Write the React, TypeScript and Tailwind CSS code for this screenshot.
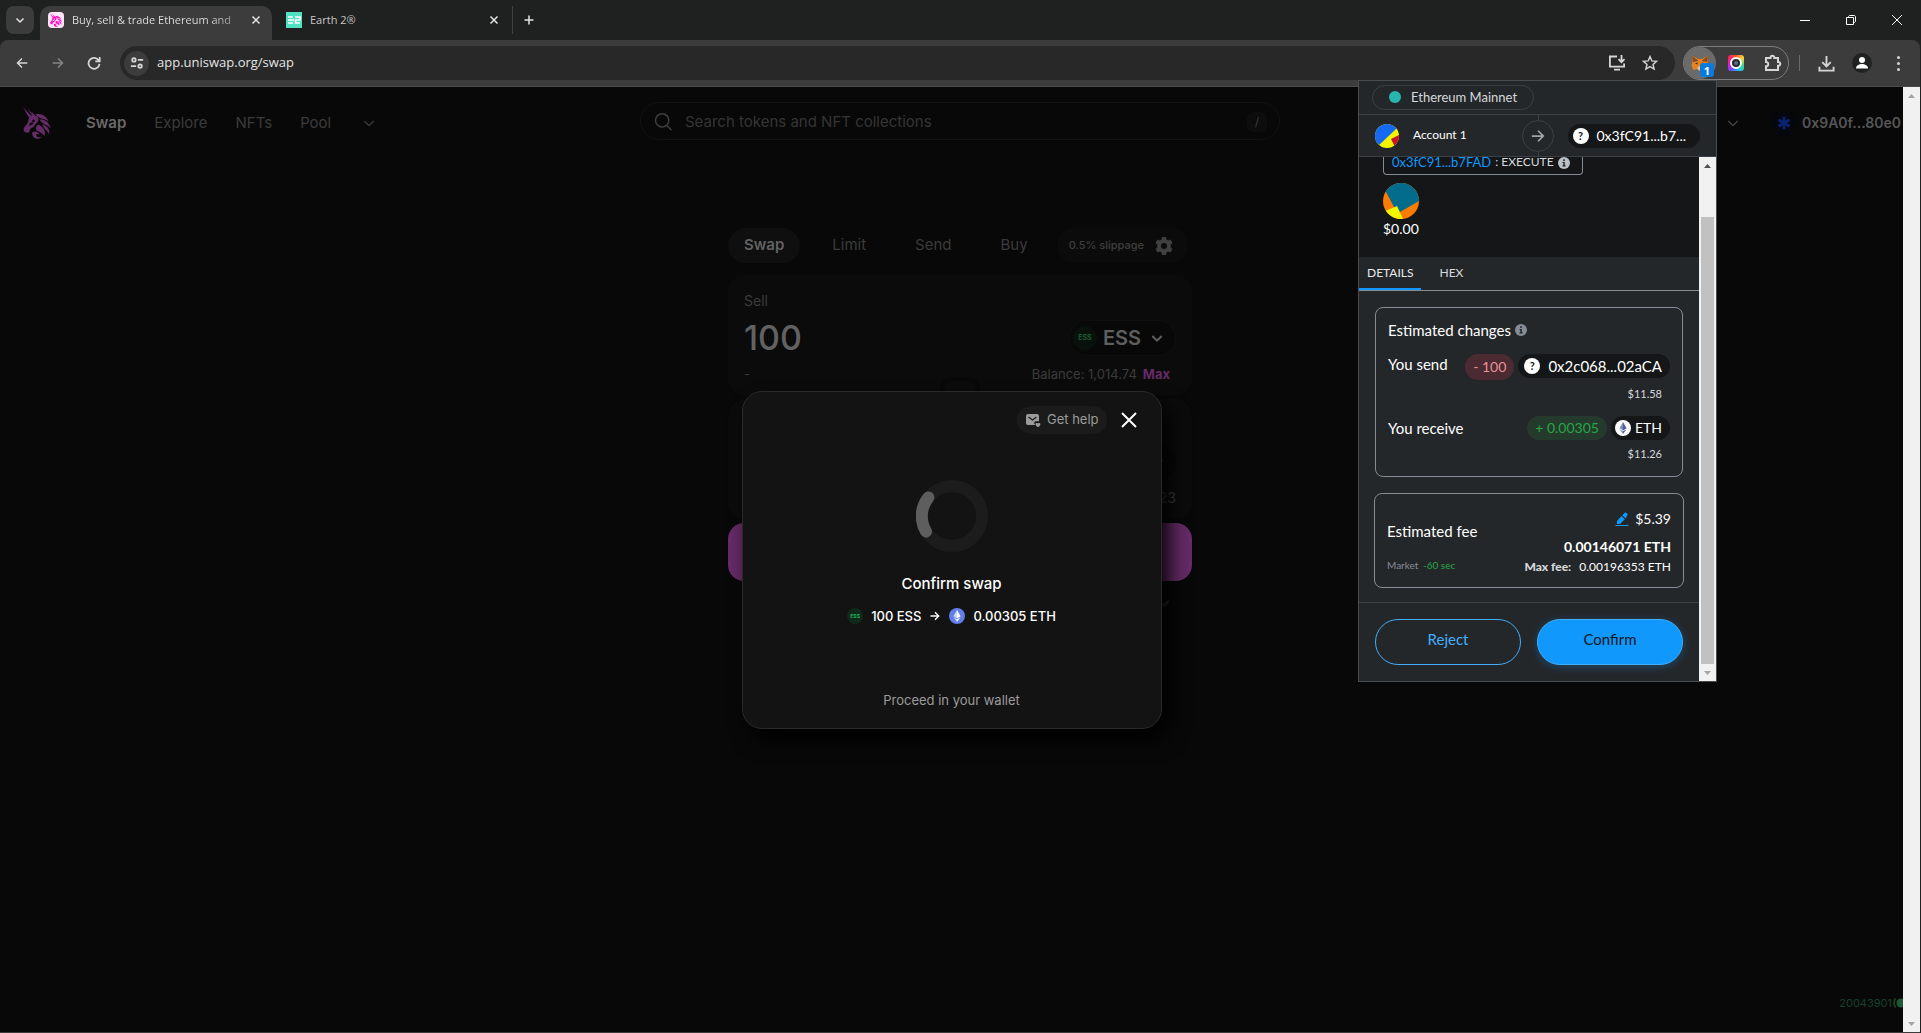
import React from "react";

const CHROME = "font-['Open_Sans','Noto_Sans',sans-serif]";
const PAGE = "font-[Inter,'Liberation_Sans',sans-serif]";

type IconProps = { className?: string };

function Line({ d, className = "", w = 2, box = 24 }: IconProps & { d: string; w?: number; box?: number }) {
  return (
    <svg
      viewBox={`0 0 ${box} ${box}`}
      className={`shrink-0 ${className}`}
      fill="none"
      stroke="currentColor"
      strokeWidth={w}
      aria-hidden="true"
    >
      <path d={d} />
    </svg>
  );
}

const CROSS = "M5 5 19 19M19 5 5 19";
const CHEVRON = "M5 9l7 7 7-7";

function Unicorn({ className = "" }: IconProps) {
  return (
    <svg viewBox="0 0 28 32" className={`shrink-0 ${className}`} fill="currentColor" aria-hidden="true">
      <path d="M0 0 8.800 9.500 7.200 11.500 5 9Z" />
      <path d="M4 1 10.500 8 9.600 9.200Z" />
      <path
        fillRule="evenodd"
        d="M8.500 4.500 12 8.500C14.500 9 15.800 11 15.500 13.200 15.200 15 13.500 15.800 12.500 17c-.9 1.200-.8 2.300-2.300 3.300-1.400.9-2.600.8-3.200 2.200-.4 1-.2 2.300-1.500 3C3.600 26.500.8 25.300.6 22.800.5 20.500 2.500 19 4 17c1.800-2.400 1-5 2.700-7.500L9.500 8ZM10.500 12.500a1.300 1.300 0 1 0 .01 0ZM7.500 15.500 5.500 19l4-1.500 1.200-2Z"
      />
      <path d="M12.500 7.300C19 6.300 24 9.500 25.500 15 22.500 11.500 18.500 12.200 15.500 10.300 14 9.300 13 8.500 12.500 7.300Z" />
      <path d="M16.500 12.200C22 12.800 27 15.500 27.500 21.500 26 18.800 23.500 18.500 21 17 18.800 15.700 17.500 14.300 16.500 12.200Z" />
      <path d="M19 17.300C24 19 27.500 22 26 28 25.500 25 24 24.500 22.500 22.800 21 21.200 20 19.500 19 17.300Z" />
      <path d="M15 17.500C19.500 19.500 23.500 23.500 21.500 29 20.500 26.500 17 25.500 14.500 24 11.800 22.500 13 19 15 17.500Z" />
      <path d="M9 25.500C12.500 23.500 16 25 16.500 28 15 26.500 12.800 27 13.500 28.700 14.200 30.200 17 30.500 19 30 16 33 10.500 32 9.500 28.500Z" />
    </svg>
  );
}

function EthMark({ className = "", bg, fg }: IconProps & { bg: string; fg: string }) {
  return (
    <svg viewBox="0 0 16 16" className={`shrink-0 ${className}`} aria-hidden="true">
      <circle cx="8" cy="8" r="8" fill={bg} />
      <path d="M8 2 4.400 8.200 8 10.400Z" fill={fg} opacity=".7" />
      <path d="M8 2 11.600 8.200 8 10.400Z" fill={fg} />
      <path d="M4.400 9.200 8 14 8 11.300Z" fill={fg} opacity=".7" />
      <path d="M11.600 9.200 8 14 8 11.300Z" fill={fg} />
    </svg>
  );
}

function Info({ className = "" }: IconProps) {
  return (
    <svg viewBox="0 0 12 12" className={`shrink-0 ${className}`} aria-hidden="true">
      <circle cx="6" cy="6" r="6" fill="currentColor" />
      <path d="M5.200 2.300h1.600v1.600H5.200zM4.500 4.900h2.300v3.300h.8v1.200H4.500V8.200h.8V6.100h-.8z" fill="#24272a" />
    </svg>
  );
}

function Unknown() {
  return (
    <span className="flex size-4 shrink-0 items-center justify-center rounded-full bg-white text-[11px] leading-4 font-bold text-[#141618]">
      ?
    </span>
  );
}

function TabStrip() {
  return (
    <div className="flex h-10 shrink-0 items-start bg-[#1f2120] pl-1.5">
      <button aria-label="Search tabs" className="mt-1.5 flex size-7 items-center justify-center rounded-lg bg-[#3c3c3c] text-[#e3e3e3]">
        <Line d={CHEVRON} className="size-3" w={3} />
      </button>
      <div className="mt-1.5 ml-1.5 flex h-[34px] w-[232px] items-center rounded-t-[10px] bg-[#3c3c3c] px-2 pb-1.5">
        <span className="flex size-4 shrink-0 items-center justify-center rounded-sm bg-[#fde4f7] text-[#fb11c0]">
          <Unicorn className="size-3.5" />
        </span>
        <span className="ml-2 w-[170px] bg-linear-to-r from-[#e3e3e3] from-80% to-[#777777] bg-clip-text text-[11px] whitespace-nowrap text-transparent">
          Buy, sell &amp; trade Ethereum and
        </span>
        <button aria-label="Close tab" className="ml-2 text-[#e3e3e3]">
          <Line d={CROSS} className="size-3" w={3} />
        </button>
      </div>
      <div className="mt-1.5 flex h-7 w-[241px] items-center border-r border-[#3f4140] pr-3 pl-3.5">
        <svg viewBox="0 0 16 16" className="size-4 shrink-0" aria-hidden="true">
          <rect width="16" height="16" fill="#50e3c2" />
          <path d="M2 5h5M2 8h6M2 11h5M9 5h5v3H9.500v3H14" stroke="#fff" strokeWidth="1.600" fill="none" />
        </svg>
        <span className="ml-2 grow text-[11px] text-[#c7c7c7]">Earth 2®</span>
        <button aria-label="Close tab" className="text-[#e3e3e3]">
          <Line d={CROSS} className="size-3" w={3} />
        </button>
      </div>
      <button aria-label="New tab" className="mt-1.5 ml-1 flex h-7 w-6 items-center justify-center text-[#e3e3e3]">
        <Line d="M12 3v18M3 12h18" className="size-3" w={3} />
      </button>
      <div className="ml-auto flex h-10 items-center text-white">
        <button aria-label="Minimize" className="flex h-10 w-[46px] items-center justify-center">
          <span className="h-px w-2.5 bg-white" />
        </button>
        <button aria-label="Restore" className="flex h-10 w-[46px] items-center justify-center">
          <Line box={10} w={1} d="M.5 2.500h7v7h-7zM2.500 2.500V2c0-.9.6-1.500 1.500-1.500h4c.9 0 1.500.6 1.500 1.500v4c0 .9-.6 1.500-1.500 1.500h-.5" className="size-2.5" />
        </button>
        <button aria-label="Close window" className="flex h-10 w-[46px] items-center justify-center">
          <Line box={10} w={1} d="M0 0 10 10M10 0 0 10" className="size-2.5" />
        </button>
      </div>
    </div>
  );
}

function Fox() {
  return (
    <svg viewBox="0 0 18 17" className="size-[18px]" aria-hidden="true">
      <path d="M1 1 7 4.500h4L17 1l-.6 5.500L17.500 11l-2 4.500-4-1-1.500 1.500H8l-1.500-1.500-4 1L.5 11l1.100-4.500Z" fill="#e8821e" />
      <path d="M1 1 7.500 6.500 2 7.500ZM17 1 10.500 6.500 16 7.500Z" fill="#8d4a1c" />
      <path d="M6.500 8 4 9l2.500 1ZM11.500 8 14 9l-2.500 1Z" fill="#233447" />
      <path d="M7 12h4l.5 2.500L10 16H8l-1.500-1.500Z" fill="#d7c1b3" />
    </svg>
  );
}

function Toolbar() {
  return (
    <div className="flex h-[47px] shrink-0 items-center rounded-t-lg border-b border-[#4c4c4c] bg-[#3c3c3c] pr-px text-[#d6d6d6]">
      <nav className="flex items-center">
        <button aria-label="Back" className="flex h-9 w-9 items-center justify-center pl-2">
          <Line box={16} d="M15 8H2.500M8 2 2 8l6 6" className="size-3" />
        </button>
        <button aria-label="Forward" className="flex h-9 w-9 items-center justify-center pl-2 text-[#858585]">
          <Line box={16} d="M1 8h12.500M8 2l6 6-6 6" className="size-3" />
        </button>
        <button aria-label="Reload" className="flex h-9 w-9 items-center justify-center pl-2">
          <Line box={16} d="M13.500 5.200A6.300 6.300 0 1 0 14.300 9M14.500 1v5H9.500" className="size-[14px]" />
        </button>
      </nav>
      <div className="ml-3 flex h-[34px] grow items-center rounded-full bg-[#282828] pr-[17px] pl-1">
        <button aria-label="Site information" className="flex size-[25px] items-center justify-center rounded-full bg-[#3c3c3c]">
          <Line box={16} d="M2.500 4.500a2 2 0 1 0 4 0 2 2 0 1 0-4 0M9 4.500h6M1 11.500h6M9.500 11.500a2 2 0 1 0 4 0 2 2 0 1 0-4 0" className="size-[14px]" />
        </button>
        <input
          aria-label="Address"
          defaultValue="app.uniswap.org/swap"
          className="ml-2 min-w-0 grow bg-transparent text-[13px] text-[#e3e3e3] outline-none"
        />
        <button aria-label="Install app" className="mr-4">
          <Line box={18} w={1.8} d="M9 2.500H1.900v10.200h14.200V9.500M6 15.600h6M13.500 1v7M10.500 5.200l3 3 3-3" className="size-[18px]" />
        </button>
        <button aria-label="Bookmark">
          <Line box={18} w={1.6} d="M9 1.800l2.100 4.900 5.300.5-4 3.500 1.200 5.200L9 13.100l-4.600 2.800 1.200-5.200-4-3.500 5.300-.5Z" className="size-4" />
        </button>
      </div>
      <div className="ml-2 flex h-[34px] w-[106px] items-center rounded-full border border-[#7d7d7d]">
        <button aria-label="MetaMask" className="relative flex size-8 items-center justify-center rounded-full bg-[#6b6b6b]">
          <Fox />
          <span className="absolute right-[2px] bottom-[2px] flex h-3.5 w-3.5 items-center justify-center rounded-[3px] bg-[#0a7bdc] text-[11px] leading-none font-bold text-white">
            1
          </span>
        </button>
        <button aria-label="Camera extension" className="ml-3 flex size-4 items-center justify-center rounded-[3px] bg-[conic-gradient(#ff5a1f,#ffd23d,#3ddc84,#22c3e6,#5b5bff,#e51bd6,#ff1f6b,#ff5a1f)]">
          <span className="flex size-3 items-center justify-center rounded-full border-2 border-white bg-[#26292e]">
            <span className="size-1 rounded-full bg-[#5d6e80]" />
          </span>
        </button>
        <button aria-label="Extensions" className="ml-5">
          <Line box={18} w={2} d="M2 4h4.500c-.3-3 4-3 3.800 0H14v4c3-.3 3 4 0 3.800V16H2v-3.700c3 .3 3-4.600 0-4.300Z" className="size-[18px]" />
        </button>
      </div>
      <span className="ml-2.5 h-4 w-px bg-[#6a6a6a]" />
      <div className="flex items-center">
        <button aria-label="Downloads" className="ml-[18px]">
          <Line box={18} w={2} d="M9 1v11M4.500 7.500 9 12l4.500-4.500M1.500 12.500v4h15v-4" className="size-[17px]" />
        </button>
        <button aria-label="Profile" className="ml-[17px] flex size-5 items-center justify-center rounded-full bg-[#202221] text-white">
          <svg viewBox="0 0 14 14" className="size-3.5" fill="currentColor" aria-hidden="true">
            <circle cx="7" cy="4" r="3" />
            <path d="M1 12.500c0-3 3-4.500 6-4.500s6 1.500 6 4.500Z" />
          </svg>
        </button>
        <button aria-label="Menu" className="mr-[13px] ml-[18px] flex w-4 flex-col items-center gap-[3px]">
          <span className="size-[3px] rounded-full bg-[#d6d6d6]" />
          <span className="size-[3px] rounded-full bg-[#d6d6d6]" />
          <span className="size-[3px] rounded-full bg-[#d6d6d6]" />
        </button>
      </div>
    </div>
  );
}

function SiteHeader() {
  return (
    <header className="relative flex h-[72px] items-center pl-[23px] text-[15px] text-[#3b3b3b]">
      <a href="#home" aria-label="Home" className="text-[#652b66]">
        <Unicorn className="h-8 w-7" />
      </a>
      <nav className="ml-[35px] flex items-center">
        <a href="#swap" className="font-semibold text-[#6a6a6a]">Swap</a>
        <a href="#explore" className="ml-[28px]">Explore</a>
        <a href="#nfts" className="ml-[28px]">NFTs</a>
        <a href="#pool" className="ml-[28px]">Pool</a>
        <button aria-label="More" className="ml-[30px]">
          <Line d={CHEVRON} className="size-4" />
        </button>
      </nav>
      <div className="absolute inset-x-0 top-[15px] mx-auto flex h-[38px] w-1/3 items-center rounded-[20px] border border-[#121212] px-3 pt-0.5">
        <Line d="M3 10a8 8 0 1 0 16 0 8 8 0 1 0-16 0M16.500 16 22 21.500" className="size-5 text-[#3f3f3f]" w={1.8} />
        <input
          aria-label="Search tokens and NFT collections"
          placeholder="Search tokens and NFT collections"
          className="ml-3 min-w-0 grow bg-transparent outline-none placeholder:text-[#353535]"
        />
        <kbd className={`flex size-5 items-center justify-center rounded-md bg-[#0d0d0d] text-xs ${PAGE}`}>/</kbd>
      </div>
      <button className="mr-[19px] ml-auto flex items-center text-sm font-semibold text-[#565656]">
        <Line d={CHEVRON} className="mr-[31px] size-4 text-[#454545]" />
        <span className="mr-1.5 flex size-6 items-center justify-center rounded-full bg-[#05070f] text-[#0a2270]">
          <Line d="M12 1v22M2.500 6.500l19 11M21.500 6.500l-19 11" w={5} className="size-3.5" />
        </span>
        0x9A0f...80e0
      </button>
    </header>
  );
}

function SwapCard() {
  return (
    <section className="mx-auto mt-[69px] w-[464px] text-[#3b3b3b]">
      <div className="flex h-[35px] items-center text-[15px]">
        <button className="h-[35px] rounded-full bg-[#0f0f0f] px-4 font-semibold text-[#626262]">Swap</button>
        <button className="ml-8">Limit</button>
        <button className="ml-[49px]">Send</button>
        <button className="ml-[49px]">Buy</button>
        <button className="mr-1 ml-auto flex h-[35px] items-center gap-2.5 rounded-full bg-[#0b0b0b] pr-3.5 pl-3 text-[11px] font-medium text-[#3f3f3f]">
          0.5% slippage
          <svg viewBox="0 0 20 20" className="size-5" aria-hidden="true">
            <path
              fillRule="evenodd"
              fill="#404040"
              d="M8 1h4l.5 2.400 1.700 1 2.300-.8 2 3.400-1.800 1.600v2.800l1.800 1.600-2 3.400-2.300-.8-1.700 1L12 19H8l-.5-2.400-1.700-1-2.300.8-2-3.400 1.800-1.600V8.600L1.500 7l2-3.400 2.300.8 1.700-1ZM10 7a3 3 0 1 0 0 6 3 3 0 1 0 0-6Z"
            />
          </svg>
        </button>
      </div>
      <div className="relative mt-3 h-[120px] rounded-2xl bg-[#0b0b0b] px-4 pt-4">
        <label htmlFor="sell" className="block text-sm">Sell</label>
        <div className="mt-2 flex h-[38px] items-center justify-between">
          <input id="sell" defaultValue="100" className="w-40 bg-transparent text-[34px] leading-9 font-medium text-[#626262] outline-none" />
          <button className="flex h-9 items-center rounded-full border border-[#0f0f0f] bg-[#080808] pr-2.5 pl-[3px] text-xl font-semibold text-[#5f5f5f]">
            <span className="mr-1.5 flex size-6 items-center justify-center rounded-full bg-[#08110c] text-[7px] font-bold text-[#1a5c33]">ESS</span>
            ESS
            <Line d={CHEVRON} className="ml-2 size-4" w={3} />
          </button>
        </div>
        <div className="mt-2 flex items-center text-[13px]">
          <span className="grow">-</span>
          <span>Balance: 1,014.74</span>
          <button className="mr-1.5 ml-1.5 font-bold text-[#652b66]">Max</button>
        </div>
        <span className="absolute inset-x-0 -bottom-[22px] mx-auto size-10 rounded-xl border-4 border-[#080808] bg-[#0b0b0b]" />
      </div>
      <div className="mt-1 flex h-[120px] flex-col items-end rounded-2xl bg-[#0b0b0b] px-4 pt-[45px]">
        <button aria-label="Select token" className="flex h-9 w-32 items-center justify-end rounded-full bg-[#080808] pr-2.5">
          <Line d={CHEVRON} className="size-4" w={3} />
        </button>
        <span className="mt-2 text-sm">Balance: 0.0123</span>
      </div>
      <button aria-label="Swap now" className="mt-1 block h-[58px] w-full rounded-2xl bg-[#652b66]" />
      <div className="mt-3.5 flex justify-end pr-5">
        <Line d={CHEVRON} className="size-4" />
      </div>
    </section>
  );
}

function ConfirmModal() {
  return (
    <div role="dialog" aria-label="Confirm swap" className="flex h-[338px] w-[420px] flex-col items-center rounded-[20px] border border-[#2a2a2a] bg-[#131313] px-5 pt-3.5 pb-4 text-[#9b9b9b] shadow-[8px_12px_20px_rgba(0,0,0,0.9)]">
      <div className="flex w-full items-center justify-end gap-2.5">
        <button className="flex h-7 items-center gap-1.5 rounded-full bg-[#1b1b1b] px-2 text-[13px]">
          <svg viewBox="0 0 16 16" className="size-4" aria-hidden="true">
            <path d="M3 2h9a2 2 0 0 1 2 2v5.500c-1-.8-2-.7-2.500 0-1.500-.7-3 .8-2 2.500L10.500 13H3a2 2 0 0 1-2-2V4a2 2 0 0 1 2-2Z" fill="#9b9b9b" />
            <path d="M3.500 5 7.500 8l4-3" stroke="#1b1b1b" strokeWidth="1.300" fill="none" />
            <path d="M13 15.200c-4-2.700-2.200-5.200 0-3.600 2.200-1.600 4 .9 0 3.600Z" fill="#9b9b9b" />
          </svg>
          Get help
        </button>
        <button aria-label="Close" className="text-white">
          <Line d={CROSS} className="size-6" w={2} />
        </button>
      </div>
      <svg viewBox="0 0 72 72" className="mt-[46px] size-[72px]" fill="none" strokeWidth="12" aria-hidden="true">
        <circle cx="36" cy="36" r="30" stroke="#1c1c1c" />
        <path d="M12.400 17.400A30 30 0 0 0 10 51.500" stroke="#5e5e5e" strokeLinecap="round" />
      </svg>
      <h2 className="mt-5 text-[15px] leading-6 font-medium text-white">Confirm swap</h2>
      <div className="mt-2.5 flex items-center text-[13px] leading-5 font-medium text-white">
        <span className="mr-2 flex size-4 items-center justify-center rounded-full bg-[#0f2a1a] text-[5px] font-bold text-[#22b455]">ESS</span>
        100 ESS
        <Line box={16} w={1.8} d="M2 8h11M8 3l5 5-5 5" className="mx-2 size-3" />
        <EthMark className="mr-2 size-4" bg="#627eea" fg="#fff" />
        0.00305 ETH
      </div>
      <p className="mt-auto text-[13px] leading-6">Proceed in your wallet</p>
    </div>
  );
}

function ScrollArrow({ up = false, dark = false }: { up?: boolean; dark?: boolean }) {
  return (
    <svg viewBox="0 0 17 17" className="size-[17px] shrink-0" aria-hidden="true">
      <path d={up ? "M5 11h7L8.500 7Z" : "M5 7h7l-3.500 4Z"} fill={dark ? "#505050" : "#a3a3a3"} />
    </svg>
  );
}

function WalletPopup() {
  return (
    <aside className="flex flex-col border border-[#4a4d50] bg-[#24272a] font-[Lato,'Open_Sans',sans-serif] text-sm text-white">
      <div className="flex h-[34px] items-center border-b border-[#3b4046] pl-[13px]">
        <button className="flex h-[25px] items-center gap-2.5 rounded-full border border-[#3b4046] px-4 pb-px text-[13px] text-[#d6d9dc]">
          <span className="size-3 rounded-full bg-[#29b6af]" />
          Ethereum Mainnet
        </button>
      </div>
      <div className="relative flex h-[42px] items-center border-b border-[#3b4046] pl-4">
        <svg viewBox="0 0 24 24" className="size-6" aria-hidden="true">
          <clipPath id="avatar"><circle cx="12" cy="12" r="12" /></clipPath>
          <g clipPath="url(#avatar)">
            <rect width="24" height="24" fill="#f3f500" />
            <path d="M0 0h24L20 6 3 22H0Z" fill="#1669f2" />
            <path d="M24 11 16 15l4 8 4-1Z" fill="#c8142c" />
          </g>
        </svg>
        <span className="ml-3.5 pb-0.5 text-xs">Account 1</span>
        <span className="absolute inset-y-0 left-1/2 w-px bg-[#3b4046]" />
        <span className="absolute left-1/2 flex size-8 -translate-x-1/2 items-center justify-center rounded-full border border-[#3b4046] bg-[#24272a] text-[#9fa6ae]">
          <Line box={16} d="M1 8h13M8 2l6 6-6 6" className="size-3.5" />
        </span>
        <button className="mr-4 ml-auto flex h-6 items-center gap-2 rounded-full bg-[#141618] pr-3.5 pl-[5px]">
          <Unknown />
          0x3fC91...b7...
        </button>
      </div>
      <div className="flex">
        <div className="min-w-0 grow">
          <div className="h-[100px] bg-[#141618] px-6">
            <div className="flex h-[18px] w-fit items-start rounded-b border border-t-0 border-[#848c96] px-2 text-[#d6d9dc]">
              <a href="#contract" className="text-[13px] leading-[10px] text-[#1098fc]">0x3fC91...b7FAD</a>
              <span className="ml-1 text-xs leading-[10px]">: EXECUTE</span>
              <Info className="mx-1 size-3 text-[#bbc0c5]" />
            </div>
            <svg viewBox="0 0 36 36" className="mt-2 size-9" aria-hidden="true">
              <clipPath id="blob"><circle cx="18" cy="18" r="18" /></clipPath>
              <g clipPath="url(#blob)">
                <rect width="36" height="36" fill="#fb7c00" />
                <path d="M0 0h36v18L17 29 11 24 2 7Z" fill="#036c8c" />
                <path d="M0 29 14 23 20 36H0Z" fill="#f3f500" />
              </g>
            </svg>
            <p className="leading-5">$0.00</p>
          </div>
          <div className="flex h-[34px] border-b border-[#848c96] text-xs text-[#d6d9dc]" role="tablist">
            <button role="tab" aria-selected="true" className="border-b-2 border-[#1098fc] px-2 text-[#e8eaec]">DETAILS</button>
            <button role="tab" aria-selected="false" className="px-[18px] pb-0.5">HEX</button>
          </div>
          <div className="px-4 pt-4 pb-3.5">
            <section className="h-[170px] rounded-lg border border-[#848c96] px-3 pt-3">
              <h3 className="flex items-center gap-1 text-[15px] leading-5">
                Estimated changes <Info className="size-3 text-[#848c96]" />
              </h3>
              <div className="mt-3.5 flex items-start leading-6">
                <span className="grow text-[15px] leading-5">You send</span>
                <span className="mr-1 flex h-[26px] items-center rounded-full bg-[#4b2a31] px-2 text-[#e88f97]">- 100</span>
                <button className="flex h-6 items-center gap-2 rounded-full bg-[#141618] pr-2 pl-1.5 text-[15px]">
                  <Unknown />
                  0x2c068...02aCA
                </button>
              </div>
              <p className="mt-1.5 pr-2 text-right text-[11px] leading-4 text-[#d6d9dc]">$11.58</p>
              <div className="mt-3.5 flex items-start leading-6">
                <span className="grow text-[15px] leading-6">You receive</span>
                <span className="mr-1 flex h-6 items-center rounded-full bg-[#243a2c] px-2 text-[#28a745]">+ 0.00305</span>
                <button className="flex h-6 items-center gap-1 rounded-full bg-[#141618] pr-2 pl-1">
                  <EthMark className="size-4" bg="#fff" fg="#4f5f95" />
                  ETH
                </button>
              </div>
              <p className="mt-1.5 pr-2 text-right text-[11px] leading-4 text-[#d6d9dc]">$11.26</p>
            </section>
            <section className="-mx-px mt-4 flex h-[95px] items-end justify-between rounded-lg border border-[#848c96] px-3 pb-3">
              <div>
                <p className="text-[15px] leading-5">Estimated fee</p>
                <p className="mt-3.5 text-[10px] leading-5 text-[#848c96]">
                  Market <span className="ml-0.5 text-[#28a745]">-60 sec</span>
                </p>
              </div>
              <div className="flex flex-col items-end pb-0.5">
                <button className="flex items-center gap-1.5 leading-7">
                  <svg viewBox="0 0 14 14" className="size-3.5" fill="#1098fc" aria-hidden="true">
                    <path d="M2 12V9L6.500 4 9.800 7.200 5 12ZM7.300 3.200 10 .6c1-.9 3.300 1.200 2.400 2.400L10.600 6.400ZM.5 13h13v1H.5Z" />
                  </svg>
                  $5.39
                </button>
                <p className="leading-7 font-bold">0.00146071 ETH</p>
                <p className="text-xs leading-3">
                  <b className="mr-2 font-black text-[#d6d9dc]">Max fee:</b>0.00196353 ETH
                </p>
              </div>
            </section>
          </div>
          <div className="flex gap-4 border-t border-[#3b4046] px-4 pt-4 pb-4">
            <button className="h-[46px] grow basis-0 rounded-full border border-[#43aefc] pb-1 text-[15px] text-[#43aefc]">Reject</button>
            <button className="h-[46px] grow basis-0 rounded-full border border-[#43aefc] bg-[#1098fc] pb-1 text-[15px] text-[#141618] shadow-[0_2px_8px_rgba(16,152,252,0.3)]">Confirm</button>
          </div>
        </div>
        <div className="flex w-[17px] shrink-0 flex-col bg-[#f1f1f1]">
          <ScrollArrow up dark />
          <div className="mx-0.5 mt-[43px] grow bg-[#c1c1c1]" />
          <ScrollArrow />
        </div>
      </div>
    </aside>
  );
}

export default function App() {
  return (
    <div className={`relative flex h-screen flex-col overflow-hidden bg-[#1f2120] pr-px ${CHROME}`}>
      <TabStrip />
      <Toolbar />
      <main className={`relative min-h-0 grow overflow-hidden border-b border-[#3b3b3b] bg-[#080808] ${PAGE}`}>
        <SiteHeader />
        <SwapCard />
        <div className="absolute inset-y-0 right-[17px] left-0 flex items-center justify-center">
          <ConfirmModal />
        </div>
        <div className="absolute right-3 bottom-[21px] flex items-center text-[11px] text-[#18422a]">
          20043901
          <svg viewBox="0 0 16 12" className="h-3 w-4" aria-hidden="true">
            <path d="M3.500 1.500q-3 4.500 0 9" stroke="#1a4a2c" strokeWidth="1.500" fill="none" />
            <circle cx="9" cy="6" r="4.500" fill="#1d5a33" />
          </svg>
        </div>
        <div className="absolute inset-y-0 right-0 flex w-[17px] flex-col justify-between bg-[#f1f1f1]">
          <ScrollArrow up />
          <ScrollArrow />
        </div>
      </main>
      <div className="absolute top-20 right-[204px] z-20 w-[359px]">
        <WalletPopup />
      </div>
    </div>
  );
}
